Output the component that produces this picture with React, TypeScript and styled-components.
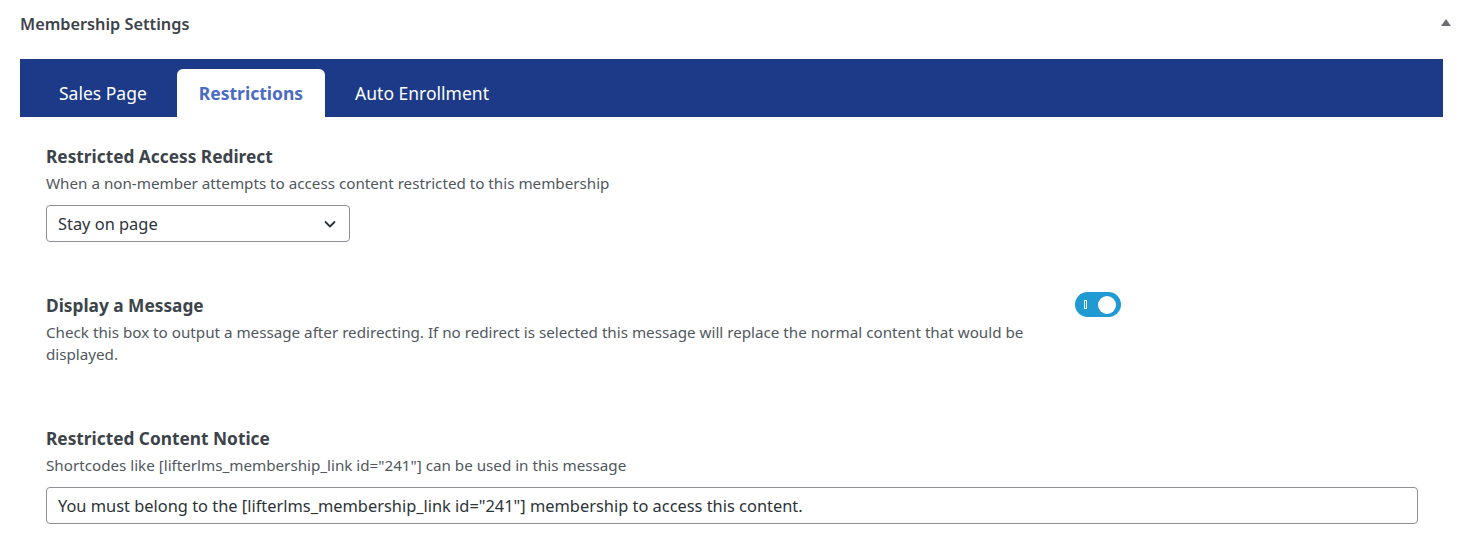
import React, { useState } from 'react';
import styled, { createGlobalStyle } from 'styled-components';

const GlobalStyle = createGlobalStyle`
  html, body {
    margin: 0;
    padding: 0;
    background: #ffffff;
  }
  body {
    font-family: "Noto Sans", "Open Sans", "Liberation Sans", sans-serif;
    color: #3c434a;
  }
`;

const blue = '#1c3a87';
const activeText = '#4a6cc2';
const toggleBlue = '#1f9ad3';

const Panel = styled.div`
  width: 1471px;
  padding-bottom: 20px;
`;

const PanelHeader = styled.div`
  display: flex;
  align-items: center;
  justify-content: space-between;
  height: 48px;
  padding: 0 20px 0 20px;
`;

const PanelTitle = styled.h2`
  margin: 0;
  font-size: 16.3px;
  font-weight: 600;
  color: #3c434a;
`;

const Caret = styled.span`
  width: 0;
  height: 0;
  border-left: 5px solid transparent;
  border-right: 5px solid transparent;
  border-bottom: 7px solid #6b6f73;
  margin-bottom: 4px;
`;

const TabBar = styled.div`
  display: flex;
  align-items: flex-end;
  background: ${blue};
  height: 58px;
  margin: 11px 28px 0 20px;
  padding-left: 9px;
`;

const Tab = styled.button<{ $active?: boolean }>`
  border: 0;
  outline: 0;
  cursor: pointer;
  height: 48px;
  padding: 0 ${(p) => (p.$active ? 22 : 30)}px;
  border-radius: 6px 6px 0 0;
  font-family: inherit;
  font-size: 17.5px;
  font-weight: ${(p) => (p.$active ? 700 : 400)};
  color: ${(p) => (p.$active ? activeText : '#ffffff')};
  background: ${(p) => (p.$active ? '#ffffff' : 'transparent')};
`;

const Content = styled.div`
  padding: 28px 53px 0 46px;
`;

const Field = styled.div<{ $gap?: number }>`
  margin-bottom: ${(p) => p.$gap ?? 0}px;
`;

const FieldRow = styled.div`
  display: flex;
  align-items: flex-start;
`;

const FieldText = styled.div`
  width: 1000px;
`;

const Label = styled.div`
  font-size: 17.3px;
  font-weight: 700;
  color: #3c434a;
  line-height: 24px;
`;

const Desc = styled.div`
  font-size: 15.2px;
  color: #50575e;
  line-height: 22px;
  margin-top: 3px;
`;

const SelectBox = styled.div`
  width: 304px;
  height: 37px;
  margin-top: 11px;
  box-sizing: border-box;
  border: 1px solid #8c8f94;
  border-radius: 4px;
  display: flex;
  align-items: center;
  padding: 0 12px 0 11px;
  justify-content: space-between;
  font-size: 16.4px;
  color: #2c3338;
`;

const TextInput = styled.input`
  display: block;
  width: 100%;
  height: 37px;
  margin-top: 11px;
  box-sizing: border-box;
  border: 1px solid #8c8f94;
  border-radius: 4px;
  padding: 0 11px;
  font-family: inherit;
  font-size: 16.4px;
  color: #2c3338;
  outline: none;
`;

const Toggle = styled.button<{ $on: boolean }>`
  position: relative;
  flex-shrink: 0;
  margin-left: 29px;
  margin-top: -2px;
  width: 46px;
  height: 25px;
  border: 0;
  padding: 0;
  border-radius: 13px;
  background: ${(p) => (p.$on ? toggleBlue : '#8c8f94')};
  cursor: pointer;
`;

const Knob = styled.span<{ $on: boolean }>`
  position: absolute;
  top: 3.5px;
  left: ${(p) => (p.$on ? 23 : 4)}px;
  width: 18px;
  height: 18px;
  border-radius: 50%;
  background: #ffffff;
`;

const OnMark = styled.span`
  position: absolute;
  left: 9px;
  top: 8px;
  width: 1px;
  height: 7px;
  border: 1px solid #ffffff;
`;

const Chevron = () => (
  <svg width="14" height="14" viewBox="0 0 14 14" fill="none">
    <path d="M2.5 5 L7 9.5 L11.5 5" stroke="#2c3338" strokeWidth="1.8" strokeLinecap="round" strokeLinejoin="round" />
  </svg>
);

const App = () => {
  const [tab, setTab] = useState('Restrictions');
  const [on, setOn] = useState(true);

  return (
    <Panel>
      <GlobalStyle />
      <PanelHeader>
        <PanelTitle>Membership Settings</PanelTitle>
        <Caret />
      </PanelHeader>

      <TabBar>
        {['Sales Page', 'Restrictions', 'Auto Enrollment'].map((t) => (
          <Tab key={t} $active={tab === t} onClick={() => setTab(t)}>
            {t}
          </Tab>
        ))}
      </TabBar>

      <Content>
        <Field $gap={52}>
          <Label>Restricted Access Redirect</Label>
          <Desc>When a non-member attempts to access content restricted to this membership</Desc>
          <SelectBox>
            <span>Stay on page</span>
            <Chevron />
          </SelectBox>
        </Field>

        <Field $gap={62}>
          <FieldRow>
            <FieldText>
              <Label>Display a Message</Label>
              <Desc>
                Check this box to output a message after redirecting. If no redirect is selected this message will replace the normal content that would be displayed.
              </Desc>
            </FieldText>
            <Toggle $on={on} onClick={() => setOn(!on)}>
              {on && <OnMark />}
              <Knob $on={on} />
            </Toggle>
          </FieldRow>
        </Field>

        <Field>
          <Label>Restricted Content Notice</Label>
          <Desc>Shortcodes like [lifterlms_membership_link id="241"] can be used in this message</Desc>
          <TextInput
            defaultValue={'You must belong to the [lifterlms_membership_link id="241"] membership to access this content.'}
          />
        </Field>
      </Content>
    </Panel>
  );
};

export default App;
